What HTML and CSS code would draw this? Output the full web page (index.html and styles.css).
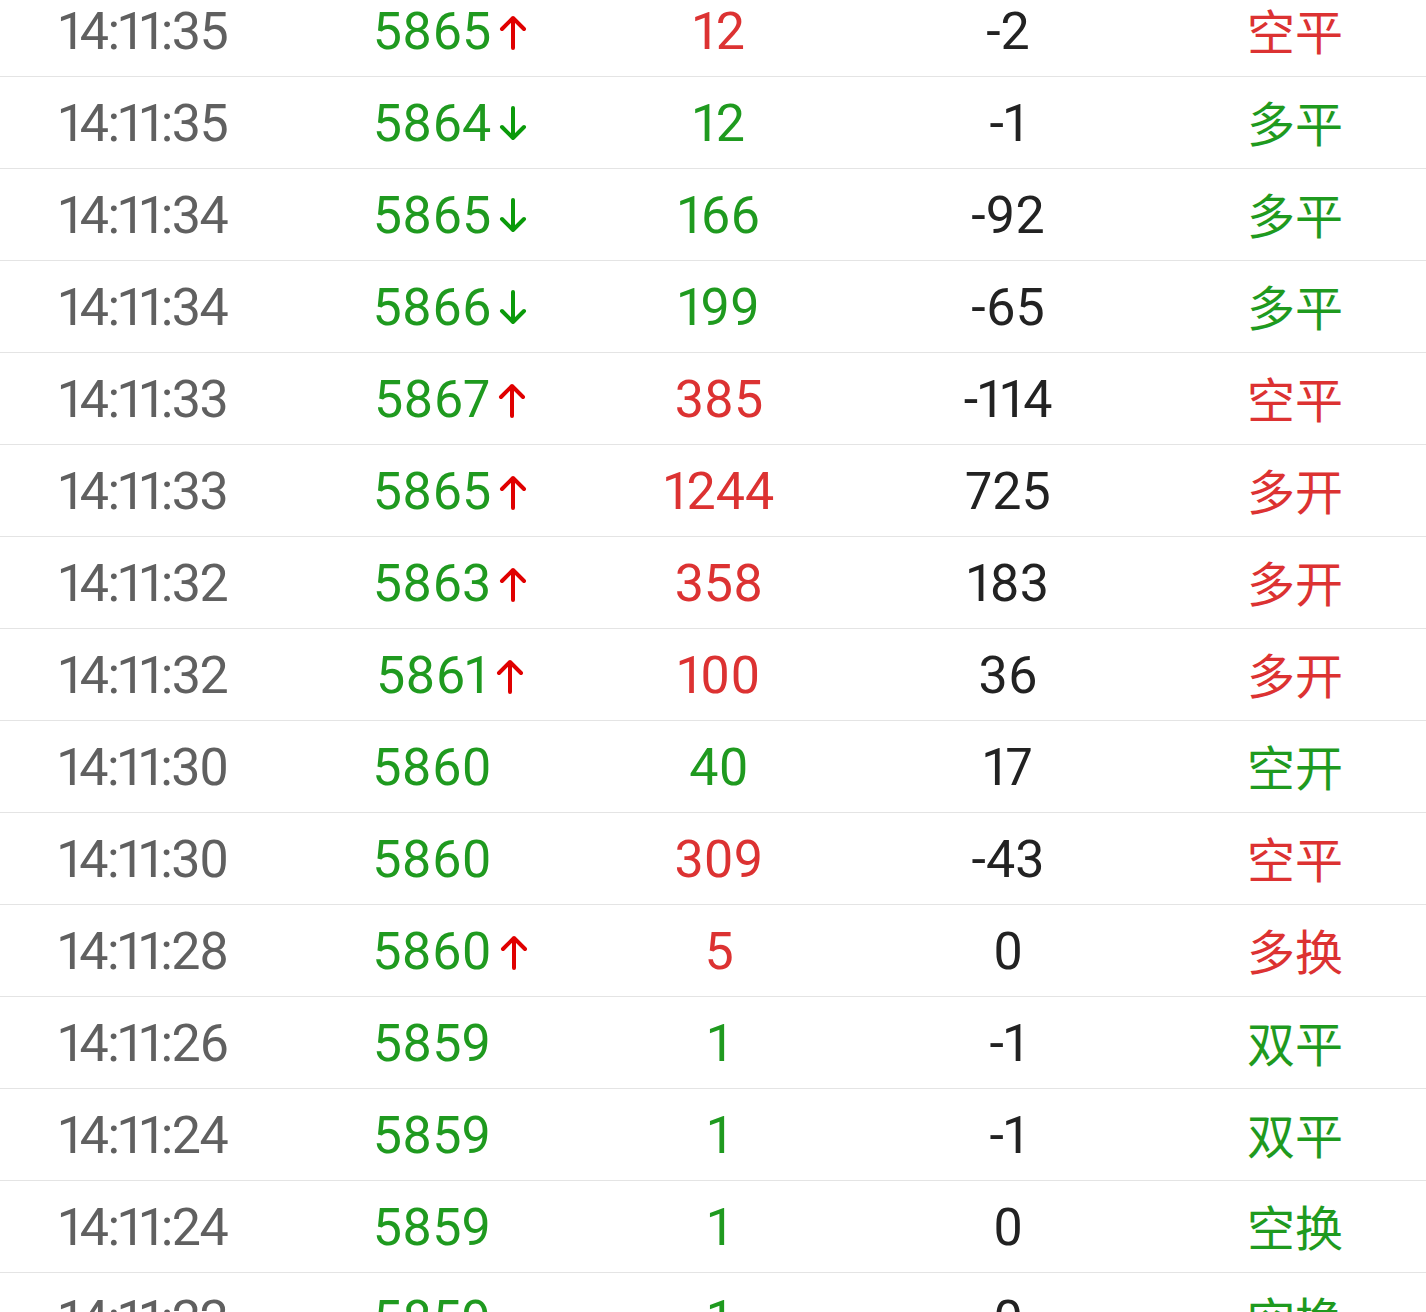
FILE: index.html
```html
<!DOCTYPE html>
<html lang="zh-CN">
<head>
    <meta charset="UTF-8">
    <meta name="viewport" content="width=device-width, initial-scale=1.0">
    <title>成交明细</title>
    <link rel="stylesheet" href="styles.css">
</head>
<body>
    <svg width="0" height="0" class="defs">
        <symbol id="arrow-up" viewBox="0 0 28 36">
            <path d="M14 34 V4 M3 15 L14 4 L25 15" fill="none" stroke="currentColor" stroke-width="4" stroke-linecap="round" stroke-linejoin="round"/>
        </symbol>
        <symbol id="arrow-down" viewBox="0 0 28 36">
            <path d="M14 2 V32 M3 21 L14 32 L25 21" fill="none" stroke="currentColor" stroke-width="4" stroke-linecap="round" stroke-linejoin="round"/>
        </symbol>
    </svg>

    <div id="ticks">
        <div class="row">
            <span class="time">14:11:35</span>
            <span class="price">5865<svg class="arrow up"><use href="#arrow-up"/></svg></span>
            <span class="vol red">12</span>
            <span class="delta">-2</span>
            <span class="kind red">空平</span>
        </div>
        <div class="row">
            <span class="time">14:11:35</span>
            <span class="price">5864<svg class="arrow down"><use href="#arrow-down"/></svg></span>
            <span class="vol green">12</span>
            <span class="delta">-1</span>
            <span class="kind green">多平</span>
        </div>
        <div class="row">
            <span class="time">14:11:34</span>
            <span class="price">5865<svg class="arrow down"><use href="#arrow-down"/></svg></span>
            <span class="vol green">166</span>
            <span class="delta">-92</span>
            <span class="kind green">多平</span>
        </div>
        <div class="row">
            <span class="time">14:11:34</span>
            <span class="price">5866<svg class="arrow down"><use href="#arrow-down"/></svg></span>
            <span class="vol green">199</span>
            <span class="delta">-65</span>
            <span class="kind green">多平</span>
        </div>
        <div class="row">
            <span class="time">14:11:33</span>
            <span class="price">5867<svg class="arrow up"><use href="#arrow-up"/></svg></span>
            <span class="vol red">385</span>
            <span class="delta">-114</span>
            <span class="kind red">空平</span>
        </div>
        <div class="row">
            <span class="time">14:11:33</span>
            <span class="price">5865<svg class="arrow up"><use href="#arrow-up"/></svg></span>
            <span class="vol red">1244</span>
            <span class="delta">725</span>
            <span class="kind red">多开</span>
        </div>
        <div class="row">
            <span class="time">14:11:32</span>
            <span class="price">5863<svg class="arrow up"><use href="#arrow-up"/></svg></span>
            <span class="vol red">358</span>
            <span class="delta">183</span>
            <span class="kind red">多开</span>
        </div>
        <div class="row">
            <span class="time">14:11:32</span>
            <span class="price">5861<svg class="arrow up"><use href="#arrow-up"/></svg></span>
            <span class="vol red">100</span>
            <span class="delta">36</span>
            <span class="kind red">多开</span>
        </div>
        <div class="row">
            <span class="time">14:11:30</span>
            <span class="price">5860<svg class="arrow none"></svg></span>
            <span class="vol green">40</span>
            <span class="delta">17</span>
            <span class="kind green">空开</span>
        </div>
        <div class="row">
            <span class="time">14:11:30</span>
            <span class="price">5860<svg class="arrow none"></svg></span>
            <span class="vol red">309</span>
            <span class="delta">-43</span>
            <span class="kind red">空平</span>
        </div>
        <div class="row">
            <span class="time">14:11:28</span>
            <span class="price">5860<svg class="arrow up"><use href="#arrow-up"/></svg></span>
            <span class="vol red">5</span>
            <span class="delta">0</span>
            <span class="kind red">多换</span>
        </div>
        <div class="row">
            <span class="time">14:11:26</span>
            <span class="price">5859<svg class="arrow none"></svg></span>
            <span class="vol green">1</span>
            <span class="delta">-1</span>
            <span class="kind green">双平</span>
        </div>
        <div class="row">
            <span class="time">14:11:24</span>
            <span class="price">5859<svg class="arrow none"></svg></span>
            <span class="vol green">1</span>
            <span class="delta">-1</span>
            <span class="kind green">双平</span>
        </div>
        <div class="row">
            <span class="time">14:11:24</span>
            <span class="price">5859<svg class="arrow none"></svg></span>
            <span class="vol green">1</span>
            <span class="delta">0</span>
            <span class="kind green">空换</span>
        </div>
        <div class="row">
            <span class="time">14:11:22</span>
            <span class="price">5859<svg class="arrow none"></svg></span>
            <span class="vol green">1</span>
            <span class="delta">0</span>
            <span class="kind green">空换</span>
        </div>
    </div>
</body>
</html>
```

FILE: styles.css
```css
body {
    margin: 0;
    padding: 0;
    background: #ffffff;
    font-family: Roboto, "Noto Sans CJK SC", sans-serif;
    overflow: hidden;
}

.defs {
    position: absolute;
}

/* list is scrolled a little: first row is cut at the top */
#ticks {
    margin-top: -15px;
}

.row {
    display: grid;
    grid-template-columns: 286px 328px 210px 368px 206px;
    align-items: center;
    box-sizing: border-box;
    height: 92px;
    padding-top: 3px;
    border-bottom: 1px solid #e4e4e4;
    font-size: 52px;
    font-variant-numeric: proportional-nums;
}

.row > span {
    display: flex;
    justify-content: center;
    align-items: center;
    line-height: 1;
}

.time {
    color: #606060;
    letter-spacing: -1.5px;
}

.price {
    color: #1f9a1f;
}

.arrow {
    width: 28px;
    height: 36px;
    margin-left: 8px;
}

.arrow.up { color: #e00000; }
.arrow.down { color: #0a9a0a; }
.arrow.none { visibility: hidden; }

.delta {
    color: #222222;
}

.kind {
    font-family: "Noto Sans CJK SC", sans-serif;
    font-size: 48px;
    margin-top: -6px;
}

.red { color: #dc3232; }
.green { color: #1f9a1f; }
```
